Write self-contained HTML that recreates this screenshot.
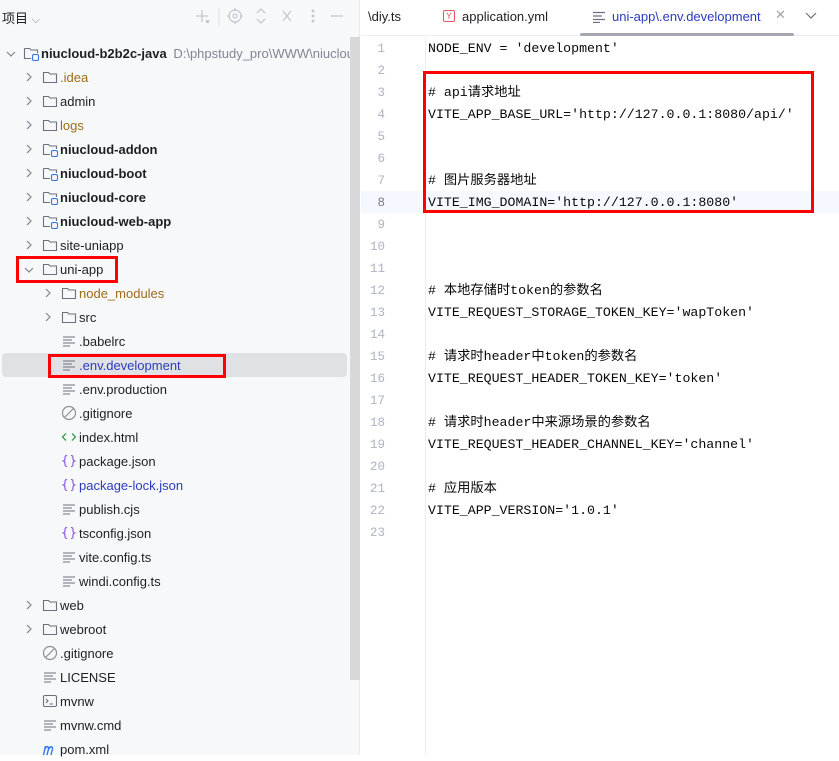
<!DOCTYPE html>
<html><head><meta charset="utf-8"><style>
*{margin:0;padding:0;box-sizing:border-box}
body{width:839px;height:755px;overflow:hidden;background:#fff;font-family:"Liberation Sans","Noto Sans CJK SC",sans-serif;position:relative}
#left{position:absolute;left:0;top:0;width:360px;height:755px;background:#f7f8fa;border-right:1px solid #ebecf0}
.row{position:absolute;height:24px;line-height:24px;font-size:13px;color:#1e1f22;white-space:nowrap;overflow:hidden}
.ic{position:absolute;top:5px;line-height:0}
.ic svg{display:block}
.txt{position:absolute;top:1px}
.code{position:absolute;left:428px;font-family:"Liberation Mono","Noto Sans CJK SC",monospace;font-size:13.25px;color:#080808;white-space:pre;height:22px;line-height:22px;top:0}
.ln{position:absolute;left:361px;width:24px;text-align:right;font-family:"Liberation Mono",monospace;font-size:12.5px;color:#aeb3c2;height:22px;line-height:22px}
.red{position:absolute;border:3px solid #f00}
</style></head><body>
<div id="left">
<div style="position:absolute;left:2px;top:8px;font-size:13px;color:#1e1f22;font-family:'Liberation Sans','Noto Sans CJK SC',sans-serif">项目 <span style="color:#818594;font-size:11px">⌵</span></div>
<svg style="position:absolute;left:190px;top:6px" width="160" height="22" fill="none" stroke="#c5c8d0" stroke-width="1.3">
<path d="M12 4v12M6 10h12"/><path d="M16 14h3v3h-3z" fill="#c5c8d0" stroke="none"/>
<line x1="29" y1="2" x2="29" y2="20" stroke="#e4e5e8"/>
<circle cx="45" cy="10" r="6"/><circle cx="45" cy="10" r="2"/><path d="M45 2v3M45 15v3M37 10h3M50 10h3"/>
<path d="M67 7l4-4 4 4M67 13l4 4 4-4"/>
<path d="M93 5l8 10M101 5l-8 10"/>
<circle cx="123" cy="5" r=".8" fill="#c5c8d0"/><circle cx="123" cy="10" r=".8" fill="#c5c8d0"/><circle cx="123" cy="15" r=".8" fill="#c5c8d0"/>
<path d="M141 10h12"/>
</svg>
<div style="position:absolute;left:2px;top:353px;width:345px;height:24px;background:#dfe1e5;border-radius:4px"></div>
</div>

<div id="tree"></div>
<div style="position:absolute;left:350px;top:37px;width:10px;height:643px;background:#d8d8da;z-index:5"></div>

<!-- editor -->
<div style="position:absolute;left:361px;top:0;width:478px;height:36px;border-bottom:1px solid #ebecf0"></div>
<div style="position:absolute;left:368px;top:9px;font-size:13px;color:#1e1f22">\diy.ts</div>
<div style="position:absolute;left:443px;top:10px;width:12px;height:12px;border:1px solid #e55765;border-radius:2px;color:#e55765;font-size:9px;line-height:10px;text-align:center">Y</div>
<div style="position:absolute;left:462px;top:9px;font-size:13px;color:#1e1f22">application.yml</div>
<svg style="position:absolute;left:592px;top:11px" width="14" height="12" stroke="#6c707e" stroke-width="1.2"><path d="M1 1.5h12M1 5h9M1 8.5h12M1 11.5h7"/></svg>
<div style="position:absolute;left:612px;top:9px;font-size:13px;color:#2b3bbd">uni-app\.env.development</div>
<div style="position:absolute;left:775px;top:7px;font-size:13px;color:#a0a4ab">✕</div>
<svg style="position:absolute;left:805px;top:12px" width="12" height="8" fill="none" stroke="#6c707e" stroke-width="1.2"><path d="M1 1l5 5 5-5"/></svg>
<div style="position:absolute;left:580px;top:33px;width:214px;height:3px;background:#a5a8b0;border-radius:2px"></div>

<div style="position:absolute;left:361px;top:191px;width:478px;height:22px;background:#f5f8fe"></div>
<div style="position:absolute;left:425px;top:37px;width:1px;height:718px;background:#ebecf0"></div>
<div style="position:absolute;left:423px;top:104px;width:2px;height:18px;background:#6e8fd8"></div>
<div style="position:absolute;left:423px;top:192px;width:2px;height:18px;background:#6e8fd8"></div>

<div id="code"></div>

<div class="red" style="left:423px;top:71px;width:391px;height:142px"></div>
<div class="red" style="left:16px;top:256px;width:102px;height:27px"></div>
<div class="red" style="left:48px;top:354px;width:178px;height:24px"></div>

<script>
var folder='<svg width="16" height="14" fill="none" stroke="#6c707e" stroke-width="1.1"><path d="M1.5 2.5h5l1.5 1.5h6.5v8.5h-13z"/></svg>';
var mod='<svg width="18" height="15" fill="none" stroke="#6c707e" stroke-width="1.1"><path d="M1.5 2.5h5l1.5 1.5h6.5v3M8 12.5h-6.5v-10"/><rect x="9.5" y="8.5" width="6" height="6" rx="1.5" stroke="#3574f0"/></svg>';
var txt='<svg width="16" height="14" stroke="#6c707e" stroke-width="1.1"><path d="M2 3h12M2 6h9M2 9h12M2 12h7"/></svg>';
var ign='<svg width="16" height="16" fill="none" stroke="#8c8f99" stroke-width="1.2" style="margin-top:-1px"><circle cx="8" cy="8" r="6.5"/><path d="M3.5 12.5l9-9"/></svg>';
var html='<svg width="16" height="14" fill="none" stroke="#3d9a50" stroke-width="1.3"><path d="M5 3.5l-3.5 3.5 3.5 3.5M11 3.5l3.5 3.5-3.5 3.5"/></svg>';
var json='<svg width="16" height="14" fill="none" stroke="#8a5ce6" stroke-width="1.2"><path d="M6 1.5c-2 0-2 1-2 3s-1.5 2.5-1.5 2.5 1.5.5 1.5 2.5 0 3 2 3M10 1.5c2 0 2 1 2 3s1.5 2.5 1.5 2.5-1.5.5-1.5 2.5 0 3-2 3"/></svg>';
var term='<svg width="16" height="14" fill="none" stroke="#6c707e" stroke-width="1.1"><rect x="1.5" y="1.5" width="13" height="11" rx="1.5"/><path d="M4 5l2 2-2 2M7.5 10h3.5"/></svg>';
var mvn='<svg width="16" height="14" fill="none" stroke="#3574f0" stroke-width="1.4"><path d="M1.5 13l2-9M3 7c1-3 4-3 3.5 0l-1.5 6M7 7c1-3 4-3 3.5 0l-1.5 6"/></svg>';
var rows=[
[0,'o',mod,'<b>niucloud-b2b2c-java</b> <span style="color:#818594;margin-left:3px">D:\\phpstudy_pro\\WWW\\niucloud-b2b2c</span>'],
[1,'c',folder,'<span style="color:#9e6a18">.idea</span>'],
[1,'c',folder,'admin'],
[1,'c',folder,'<span style="color:#9e6a18">logs</span>'],
[1,'c',mod,'<b>niucloud-addon</b>'],
[1,'c',mod,'<b>niucloud-boot</b>'],
[1,'c',mod,'<b>niucloud-core</b>'],
[1,'c',mod,'<b>niucloud-web-app</b>'],
[1,'c',folder,'site-uniapp'],
[1,'o',folder,'uni-app'],
[2,'c',folder,'<span style="color:#9e6a18">node_modules</span>'],
[2,'c',folder,'src'],
[2,'',txt,'.babelrc'],
[2,'',txt,'<span style="color:#2b3bbd">.env.development</span>'],
[2,'',txt,'.env.production'],
[2,'',ign,'.gitignore'],
[2,'',html,'index.html'],
[2,'',json,'package.json'],
[2,'',json,'<span style="color:#2b3bbd">package-lock.json</span>'],
[2,'',txt,'publish.cjs'],
[2,'',json,'tsconfig.json'],
[2,'',txt,'vite.config.ts'],
[2,'',txt,'windi.config.ts'],
[1,'c',folder,'web'],
[1,'c',folder,'webroot'],
[1,'',ign,'.gitignore'],
[1,'',txt,'LICENSE'],
[1,'',term,'mvnw'],
[1,'',txt,'mvnw.cmd'],
[1,'',mvn,'pom.xml']];
var h='';
var ax=[6,24,43],ix=[23,42,61],tx=[41,60,79];
rows.forEach(function(r,i){
var y=41+24*i;var l=r[0];
h+='<div class="row" style="left:0;top:'+y+'px;width:350px">';
if(r[1]=='c')h+='<svg class="ic" style="left:'+ax[l]+'px;top:7px;position:absolute" width="10" height="10" fill="none" stroke="#818594" stroke-width="1.2"><path d="M3 1l4 4-4 4"/></svg>';
if(r[1]=='o')h+='<svg class="ic" style="left:'+ax[l]+'px;top:8px;position:absolute" width="10" height="10" fill="none" stroke="#818594" stroke-width="1.2"><path d="M1 3l4 4 4-4"/></svg>';
h+='<span class="ic" style="left:'+ix[l]+'px">'+r[2]+'</span><span class="txt" style="left:'+tx[l]+'px">'+r[3]+'</span></div>';
});
document.getElementById('tree').innerHTML=h;
var code=["NODE_ENV = 'development'","","# api请求地址","VITE_APP_BASE_URL='http://127.0.0.1:8080/api/'","","","# 图片服务器地址","VITE_IMG_DOMAIN='http://127.0.0.1:8080'","","","","# 本地存储时token的参数名","VITE_REQUEST_STORAGE_TOKEN_KEY='wapToken'","","# 请求时header中token的参数名","VITE_REQUEST_HEADER_TOKEN_KEY='token'","","# 请求时header中来源场景的参数名","VITE_REQUEST_HEADER_CHANNEL_KEY='channel'","","# 应用版本","VITE_APP_VERSION='1.0.1'",""];
var c='';
code.forEach(function(s,i){var y=38+22*i;
c+='<div class="ln" style="top:'+y+'px;'+(i==7?'color:#767a8a':'')+'">'+(i+1)+'</div>';
c+='<div class="code" style="top:'+y+'px"></div>';});
document.getElementById('code').innerHTML=c;
var els=document.querySelectorAll('#code .code');els.forEach(function(e,i){e.textContent=code[i];});
</script>
</body></html>
